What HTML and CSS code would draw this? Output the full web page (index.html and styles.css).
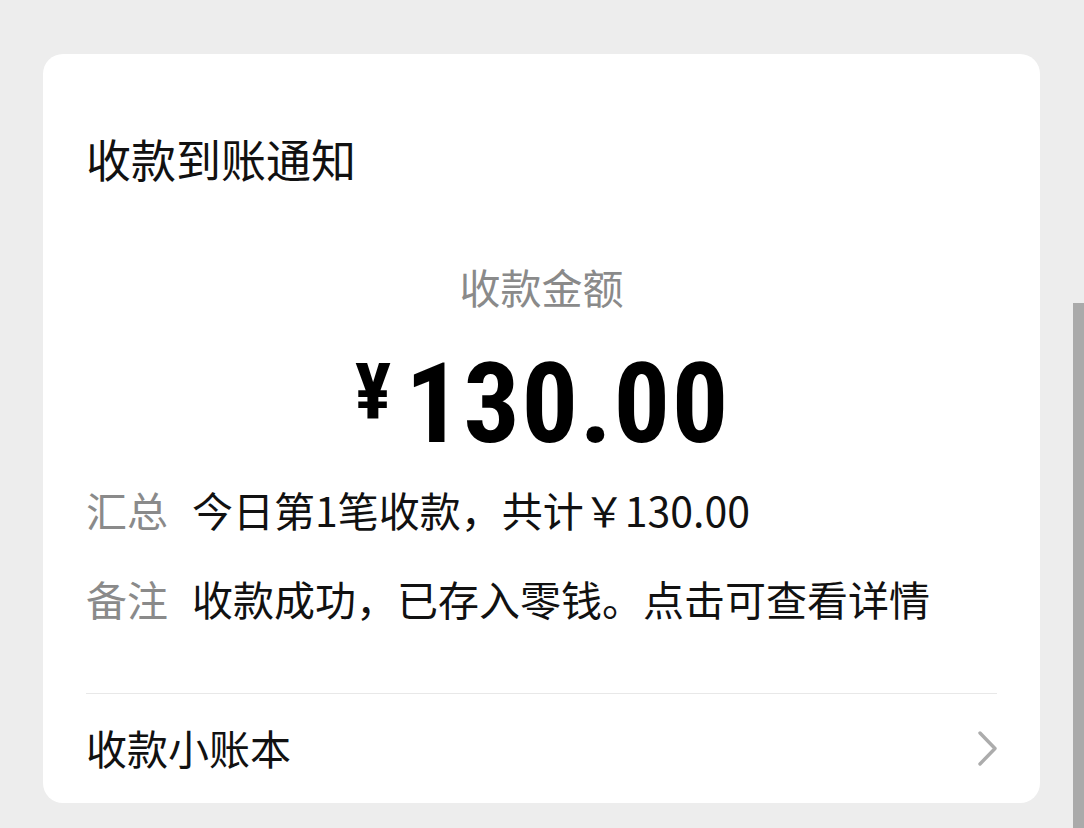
FILE: index.html
```html
<!DOCTYPE html>
<html lang="zh-CN">
<head>
<meta charset="utf-8">
<title>收款到账通知</title>
<link rel="stylesheet" href="styles.css">
</head>
<body>
<main class="card">
  <h1 class="title">收款到账通知</h1>
  <section class="summary">
    <div class="amount-label">收款金额</div>
    <div class="amount"><span class="yen">¥</span><span class="num">130.00</span></div>
  </section>
  <dl class="details">
    <div class="row"><dt>汇总</dt><dd>今日第1笔收款，共计￥130.00</dd></div>
    <div class="row"><dt>备注</dt><dd>收款成功，已存入零钱。点击可查看详情</dd></div>
  </dl>
  <div class="footer">
    <span>收款小账本</span>
    <svg class="chevron" width="20" height="36" viewBox="0 0 20 36"><polyline points="2,2 17,17.5 2,33" fill="none" stroke="#acacac" stroke-width="3.4" stroke-linecap="round" stroke-linejoin="round"/></svg>
  </div>
</main>
<div class="scrollbar"></div>
</body>
</html>
```

FILE: styles.css
```css
html, body {
  margin: 0;
  padding: 0;
  background: #ededed;
  height: 828px;
  overflow: hidden;
}
body {
  padding: 54px 44px 0 43px;
  box-sizing: border-box;
  font-family: "Noto Sans CJK SC", "Noto Sans", sans-serif;
  color: #111;
}
.card {
  background: #fff;
  border-radius: 20px;
  height: 749px;
  box-sizing: border-box;
  padding: 75px 43px 0;
  display: flex;
  flex-direction: column;
}
.title {
  margin: 0;
  font-size: 45px;
  font-weight: 400;
  line-height: 60px;
}
.summary {
  display: flex;
  flex-direction: column;
  align-items: center;
  margin-top: 69px;
}
.amount-label {
  font-size: 41px;
  line-height: 56px;
  color: #8a8a8a;
}
.amount {
  margin-top: 34px;
  display: flex;
  align-items: flex-start;
  justify-content: center;
  font-family: Roboto, "Noto Sans", sans-serif;
  font-weight: 700;
  color: #000;
}
.yen {
  font-size: 77px;
  line-height: 77px;
  margin-top: 7px;
  margin-right: 14px;
  font-stretch: 85%;
}
.num {
  font-size: 112px;
  line-height: 112px;
  font-stretch: 85%;
  letter-spacing: 1.5px;
  margin-right: -1.5px;
}
.details {
  margin: 21px 0 0;
  display: flex;
  flex-direction: column;
  gap: 33px;
}
.row {
  display: flex;
  font-size: 41px;
  line-height: 56px;
}
.row dt {
  color: #8a8a8a;
  margin-right: 24px;
}
.row dd {
  margin: 0;
  color: #111;
}
.footer {
  margin-top: 67px;
  border-top: 1px solid #e8e8e8;
  flex: 1;
  display: flex;
  align-items: center;
  justify-content: space-between;
  padding-bottom: 4px;
  font-size: 41px;
  line-height: 56px;
}
.chevron {
  display: block;
  margin-right: -1px;
  margin-top: 4px;
}
.scrollbar {
  position: absolute;
  top: 303px;
  right: 0;
  width: 11px;
  height: 525px;
  background: #aaaaaa;
}
```
